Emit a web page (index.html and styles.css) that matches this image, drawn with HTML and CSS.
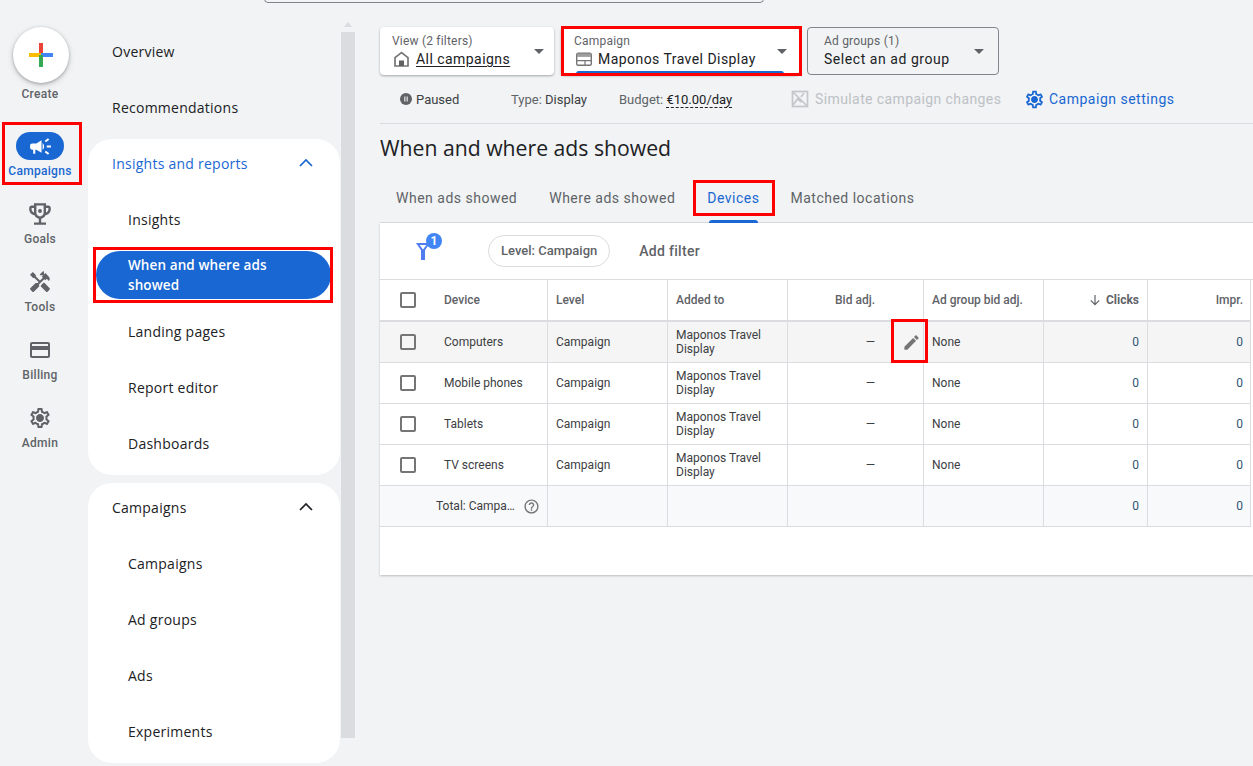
FILE: index.html
```html
<!DOCTYPE html>
<html lang="en">
<head>
  <meta charset="UTF-8" />
  <title>When and where ads showed</title>
  <link rel="stylesheet" href="styles.css">
</head>
<body>
  <div class="searchbar"></div>

  <!-- Icon rail -->
  <aside class="rail">
    <div class="rail-item create">
      <div class="create-btn">
        <svg width="24" height="24" viewBox="0 0 24 24">
          <rect x="10" y="0" width="4" height="12" fill="#ea4335"/>
          <rect x="12" y="10" width="12" height="4" fill="#4285f4"/>
          <rect x="0" y="10" width="12" height="4" fill="#fbbc04"/>
          <rect x="10" y="12" width="4" height="12" fill="#34a853"/>
        </svg>
      </div>
      <span>Create</span>
    </div>
    <div class="rail-item active">
      <div class="rail-pill">
        <svg width="25" height="25" viewBox="0 0 24 24"><path fill="#fff" d="M18 11v2h4v-2h-4zm-2 6.61c.96.71 2.21 1.65 3.2 2.39.4-.53.8-1.07 1.2-1.6-.99-.74-2.24-1.68-3.2-2.4-.4.54-.8 1.08-1.2 1.61zM20.4 5.6c-.4-.53-.8-1.07-1.2-1.6-.99.74-2.24 1.68-3.2 2.4.4.53.8 1.07 1.2 1.6.96-.72 2.21-1.65 3.2-2.4zM4 9c-1.1 0-2 .9-2 2v2c0 1.1.9 2 2 2h1v4h2v-4h1l5 3V6L8 9H4zm11.5 3c0-1.33-.58-2.53-1.5-3.35v6.69c.92-.81 1.5-2.01 1.5-3.34z"/></svg>
      </div>
      <span>Campaigns</span>
      <div class="mark"></div>
    </div>
    <div class="rail-item">
      <svg width="24" height="24" viewBox="2 2 20 20"><path d="M19 5h-2V3H7v2H5c-1.1 0-2 .9-2 2v1c0 2.55 1.92 4.63 4.39 4.94.63 1.5 1.98 2.63 3.61 2.96V19H7v2h10v-2h-4v-3.1c1.63-.33 2.98-1.46 3.61-2.96C19.08 12.63 21 10.55 21 8V7c0-1.1-.9-2-2-2zM5 8V7h2v3.82C5.84 10.4 5 9.3 5 8zm7 6c-1.65 0-3-1.35-3-3V5h6v6c0 1.65-1.35 3-3 3zm7-6c0 1.3-.84 2.4-2 2.82V7h2v1z"/><circle cx="12" cy="9.5" r="1.6"/></svg>
      <span>Goals</span>
    </div>
    <div class="rail-item">
      <svg width="24" height="24" viewBox="0 0 24 24"><path d="M21.67 18.17l-5.3-5.3h-.99l-2.54 2.54v.99l5.3 5.3c.39.39 1.02.39 1.41 0l2.12-2.12c.39-.38.39-1.02 0-1.41zM17.34 10.19l1.41-1.41 2.12 2.12c1.17-1.17 1.17-3.07 0-4.24l-3.54-3.54-1.41 1.41V1.71l-.7-.71-3.54 3.54.71.71h2.83l-1.41 1.41 1.06 1.06-2.89 2.89-4.13-4.13V5.06L4.83 2.04 2 4.87 5.03 7.9h1.41l4.13 4.13-.85.85H7.6l-5.3 5.3c-.39.39-.39 1.02 0 1.41l2.12 2.12c.39.39 1.02.39 1.41 0l5.3-5.3v-2.12l5.15-5.15 1.06 1.05z"/></svg>
      <span>Tools</span>
    </div>
    <div class="rail-item">
      <svg width="24" height="24" viewBox="0 0 24 24"><path d="M20 4H4c-1.11 0-1.99.89-1.99 2L2 18c0 1.11.89 2 2 2h16c1.11 0 2-.89 2-2V6c0-1.11-.89-2-2-2zm0 14H4v-6h16v6zm0-10H4V6h16v2z"/></svg>
      <span>Billing</span>
    </div>
    <div class="rail-item">
      <svg width="24" height="24" viewBox="0 0 24 24"><path d="M19.43 12.98c.04-.32.07-.64.07-.98 0-.34-.03-.66-.07-.98l2.11-1.65c.19-.15.24-.42.12-.64l-2-3.46c-.09-.16-.26-.25-.44-.25-.06 0-.12.01-.17.03l-2.49 1c-.52-.4-1.08-.73-1.69-.98l-.38-2.65C14.46 2.18 14.25 2 14 2h-4c-.25 0-.46.18-.49.42l-.38 2.65c-.61.25-1.17.59-1.69.98l-2.49-1c-.06-.02-.12-.03-.18-.03-.17 0-.34.09-.43.25l-2 3.46c-.13.22-.07.49.12.64l2.11 1.65c-.04.32-.07.65-.07.98 0 .33.03.66.07.98l-2.11 1.65c-.19.15-.24.42-.12.64l2 3.46c.09.16.26.25.44.25.06 0 .12-.01.17-.03l2.49-1c.52.4 1.08.73 1.69.98l.38 2.65c.03.24.24.42.49.42h4c.25 0 .46-.18.49-.42l.38-2.65c.61-.25 1.17-.59 1.69-.98l2.49 1c.06.02.12.03.18.03.17 0 .34-.09.43-.25l2-3.46c.12-.22.07-.49-.12-.64l-2.11-1.65zm-1.98-1.71c.04.31.05.52.05.73 0 .21-.02.43-.05.73l-.14 1.13.89.7 1.08.84-.7 1.21-1.27-.51-1.04-.42-.9.68c-.43.32-.84.56-1.25.73l-1.06.43-.16 1.13-.2 1.35h-1.4l-.19-1.35-.16-1.13-1.06-.43c-.43-.18-.83-.41-1.23-.71l-.91-.7-1.06.43-1.27.51-.7-1.21 1.08-.84.89-.7-.14-1.13c-.03-.31-.05-.54-.05-.74s.02-.43.05-.73l.14-1.13-.89-.7-1.08-.84.7-1.21 1.27.51 1.04.42.9-.68c.43-.32.84-.56 1.25-.73l1.06-.43.16-1.13.2-1.35h1.39l.19 1.35.16 1.13 1.06.43c.43.18.83.41 1.23.71l.91.7 1.06-.43 1.27-.51.7 1.21-1.07.85-.89.7.14 1.13zM12 8c-2.21 0-4 1.79-4 4s1.79 4 4 4 4-1.79 4-4-1.79-4-4-4z"/></svg>
      <span>Admin</span>
    </div>
  </aside>

  <!-- Section nav -->
  <nav class="nav">
    <a class="nav-link top">Overview</a>
    <a class="nav-link top">Recommendations</a>
    <div class="nav-group">
      <div class="nav-head open">
        Insights and reports
        <svg width="16" height="16" viewBox="0 0 16 16"><path d="M2 11l6-6 6 6" fill="none" stroke="currentColor" stroke-width="1.7"/></svg>
      </div>
      <a class="nav-link">Insights</a>
      <a class="nav-link selected">When and where ads showed<div class="mark"></div></a>
      <a class="nav-link">Landing pages</a>
      <a class="nav-link">Report editor</a>
      <a class="nav-link">Dashboards</a>
    </div>
    <div class="nav-group">
      <div class="nav-head">
        Campaigns
        <svg width="16" height="16" viewBox="0 0 16 16"><path d="M2 11l6-6 6 6" fill="none" stroke="currentColor" stroke-width="1.7"/></svg>
      </div>
      <a class="nav-link">Campaigns</a>
      <a class="nav-link">Ad groups</a>
      <a class="nav-link">Ads</a>
      <a class="nav-link">Experiments</a>
    </div>
  </nav>

  <div class="scrollbar">
    <div class="scroll-arrow"></div>
    <div class="scroll-thumb"></div>
  </div>

  <main class="main">
    <div class="pickers">
      <div class="picker view">
        <div class="picker-text">
          <label>View (2 filters)</label>
          <div class="picker-value">
            <svg width="18" height="18" viewBox="0 0 18 18"><path d="M9.5 2.6L3 7.6V16h13V7.6z" fill="none" stroke="#757575" stroke-width="1.7"/><rect x="7" y="10.5" width="5" height="5.5" fill="#616161"/></svg>
            <u>All campaigns</u>
          </div>
        </div>
        <i class="caret"></i>
      </div>
      <div class="picker campaign">
        <div class="picker-text">
          <label>Campaign</label>
          <div class="picker-value">
            <svg width="18" height="18" viewBox="0 0 18 18"><rect x="2.7" y="3.2" width="14.6" height="12" rx="1.5" fill="none" stroke="#757575" stroke-width="1.4"/><rect x="3" y="3.5" width="14" height="3.4" fill="#9e9e9e"/><path d="M3 10.6h14M11 10.6v4.4" stroke="#757575" stroke-width="1.2"/></svg>
            Maponos Travel Display
          </div>
        </div>
        <i class="caret"></i>
        <div class="picker-line"></div>
        <div class="mark"></div>
      </div>
      <div class="picker adgroup">
        <div class="picker-text">
          <label>Ad groups (1)</label>
          <div class="picker-value">Select an ad group</div>
        </div>
        <i class="caret"></i>
      </div>
    </div>

    <div class="infobar">
      <span class="status">
        <svg width="14" height="14" viewBox="0 0 14 14"><circle cx="7" cy="7" r="6" fill="#5f6368"/><path d="M5.3 4.5h1.1v5H5.3zM7.6 4.5h1.1v5H7.6z" fill="#f1f3f4"/></svg>
        Paused
      </span>
      <span class="info type"><em>Type:</em> Display</span>
      <span class="info budget"><em>Budget:</em> <b>€10.00/day</b></span>
      <span class="simulate">
        <svg width="18" height="18" viewBox="0 0 18 18" fill="none" stroke="#c4c7ca" stroke-width="1.7"><rect x="1.5" y="1.5" width="15" height="15"/><path d="M1.5 1.5l15 15M2 15l4.5-6 4 3M10 7l3-4"/></svg>
        Simulate campaign changes
      </span>
      <span class="settings">
        <svg width="21" height="21" viewBox="0 0 24 24"><path fill="#1967d2" d="M19.43 12.98c.04-.32.07-.64.07-.98 0-.34-.03-.66-.07-.98l2.11-1.65c.19-.15.24-.42.12-.64l-2-3.46c-.09-.16-.26-.25-.44-.25-.06 0-.12.01-.17.03l-2.49 1c-.52-.4-1.08-.73-1.69-.98l-.38-2.65C14.46 2.18 14.25 2 14 2h-4c-.25 0-.46.18-.49.42l-.38 2.65c-.61.25-1.17.59-1.69.98l-2.49-1c-.06-.02-.12-.03-.18-.03-.17 0-.34.09-.43.25l-2 3.46c-.13.22-.07.49.12.64l2.11 1.65c-.04.32-.07.65-.07.98 0 .33.03.66.07.98l-2.11 1.65c-.19.15-.24.42-.12.64l2 3.46c.09.16.26.25.44.25.06 0 .12-.01.17-.03l2.49-1c.52.4 1.08.73 1.69.98l.38 2.65c.03.24.24.42.49.42h4c.25 0 .46-.18.49-.42l.38-2.65c.61-.25 1.17-.59 1.69-.98l2.49 1c.06.02.12.03.18.03.17 0 .34-.09.43-.25l2-3.46c.12-.22.07-.49-.12-.64l-2.11-1.65zm-1.98-1.71c.04.31.05.52.05.73 0 .21-.02.43-.05.73l-.14 1.13.89.7 1.08.84-.7 1.21-1.27-.51-1.04-.42-.9.68c-.43.32-.84.56-1.25.73l-1.06.43-.16 1.13-.2 1.35h-1.4l-.19-1.35-.16-1.13-1.06-.43c-.43-.18-.83-.41-1.23-.71l-.91-.7-1.06.43-1.27.51-.7-1.21 1.08-.84.89-.7-.14-1.13c-.03-.31-.05-.54-.05-.74s.02-.43.05-.73l.14-1.13-.89-.7-1.08-.84.7-1.21 1.27.51 1.04.42.9-.68c.43-.32.84-.56 1.25-.73l1.06-.43.16-1.13.2-1.35h1.39l.19 1.35.16 1.13 1.06.43c.43.18.83.41 1.23.71l.91.7 1.06-.43 1.27-.51.7 1.21-1.07.85-.89.7.14 1.13zM12 8c-2.21 0-4 1.79-4 4s1.79 4 4 4 4-1.79 4-4-1.79-4-4-4z"/></svg>
        Campaign settings
      </span>
    </div>

    <h1>When and where ads showed</h1>

    <div class="tabs">
      <span class="tab">When ads showed</span>
      <span class="tab">Where ads showed</span>
      <span class="tab current">Devices<div class="mark"></div></span>
      <span class="tab">Matched locations</span>
    </div>

    <section class="card">
      <div class="filters">
        <div class="funnel">
          <svg width="14" height="17" viewBox="0 0 14 17"><path d="M0 0h14L9 7.2V17H5V7.2L0 0zm3.6 2l3.4 4.6L10.4 2H3.6z" fill="#4f7df0" fill-rule="evenodd"/></svg>
          <span class="badge">1</span>
        </div>
        <span class="chip">Level: Campaign</span>
        <span class="add-filter">Add filter</span>
      </div>

      <table class="grid">
        <colgroup>
          <col class="c-device"><col class="c-level"><col class="c-added"><col class="c-bid"><col class="c-group"><col class="c-num"><col class="c-num">
        </colgroup>
        <thead>
          <tr>
            <th><div class="device"><i class="check"></i>Device</div></th>
            <th>Level</th>
            <th>Added to</th>
            <th class="bid-head">Bid adj.</th>
            <th>Ad group bid adj.</th>
            <th class="num">
              <svg width="14" height="14" viewBox="0 0 14 14"><path d="M7 2v9.4M2.8 7.4L7 11.6l4.2-4.2" fill="none" stroke="#5f6368" stroke-width="1.2"/></svg>
              <b>Clicks</b>
            </th>
            <th class="num">Impr.</th>
          </tr>
        </thead>
        <tbody>
          <tr class="hover">
            <td><div class="device"><i class="check"></i>Computers</div></td>
            <td>Campaign</td>
            <td class="wrap">Maponos Travel Display</td>
            <td class="bid">
              —
              <div class="edit">
                <svg width="19" height="19" viewBox="0 0 24 24"><path fill="#757575" d="M3 17.25V21h3.75L17.81 9.94l-3.75-3.75L3 17.25zM20.71 7.04c.39-.39.39-1.02 0-1.41l-2.34-2.34c-.39-.39-1.02-.39-1.41 0l-1.83 1.83 3.75 3.75 1.83-1.83z"/></svg>
                <div class="mark"></div>
              </div>
            </td>
            <td>None</td>
            <td class="num zero">0</td>
            <td class="num zero">0</td>
          </tr>
          <tr>
            <td><div class="device"><i class="check"></i>Mobile phones</div></td>
            <td>Campaign</td>
            <td class="wrap">Maponos Travel Display</td>
            <td class="bid">—</td>
            <td>None</td>
            <td class="num zero">0</td>
            <td class="num zero">0</td>
          </tr>
          <tr>
            <td><div class="device"><i class="check"></i>Tablets</div></td>
            <td>Campaign</td>
            <td class="wrap">Maponos Travel Display</td>
            <td class="bid">—</td>
            <td>None</td>
            <td class="num zero">0</td>
            <td class="num zero">0</td>
          </tr>
          <tr>
            <td><div class="device"><i class="check"></i>TV screens</div></td>
            <td>Campaign</td>
            <td class="wrap">Maponos Travel Display</td>
            <td class="bid">—</td>
            <td>None</td>
            <td class="num zero">0</td>
            <td class="num zero">0</td>
          </tr>
          <tr class="total">
            <td>
              <div class="total-cell">
                Total: Campa…
                <svg width="17" height="17" viewBox="0 0 24 24"><path fill="#757575" d="M11 18h2v-2h-2v2zm1-16C6.48 2 2 6.48 2 12s4.48 10 10 10 10-4.48 10-10S17.52 2 12 2zm0 18c-4.41 0-8-3.59-8-8s3.59-8 8-8 8 3.59 8 8-3.59 8-8 8zm0-14c-2.21 0-4 1.79-4 4h2c0-1.1.9-2 2-2s2 .9 2 2c0 2-3 1.75-3 5h2c0-2.25 3-2.5 3-5 0-2.21-1.79-4-4-4z"/></svg>
              </div>
            </td>
            <td></td>
            <td></td>
            <td></td>
            <td></td>
            <td class="num zero">0</td>
            <td class="num zero">0</td>
          </tr>
        </tbody>
      </table>
    </section>
  </main>
</body>
</html>
```

FILE: styles.css
```css
* {
  box-sizing: border-box;
}
html, body {
  margin: 0;
  height: 766px;
  overflow: hidden;
}
body {
  display: flex;
  background: #f1f3f4;
  color: #202124;
  font-family: Roboto, "Liberation Sans", sans-serif;
  font-size: 12px;
}
svg {
  display: block;
  flex: none;
}

/* red annotation boxes from the screenshot */
.mark {
  position: absolute;
  border: 3px solid #f00;
  pointer-events: none;
}

.searchbar {
  position: absolute;
  top: -10px;
  left: 264px;
  width: 500px;
  height: 13px;
  border: 1px solid #80868b;
  border-radius: 4px;
}

/* rail */
.rail {
  width: 88px;
  flex: none;
  display: flex;
  flex-direction: column;
  align-items: center;
  padding: 27px 8px 0 0;
}
.rail-item {
  position: relative;
  width: 80px;
  height: 68px;
  display: flex;
  flex-direction: column;
  align-items: center;
  padding-top: 10px;
  color: #5f6368;
  fill: #5f6368;
  font-weight: 500;
  font-size: 12px;
  letter-spacing: 0.3px;
}
.rail-item span {
  margin-top: 5px;
  line-height: 16px;
}
.create {
  height: 97px;
  padding-top: 0;
}
.create span {
  margin-top: 3px;
}
.create-btn {
  width: 56px;
  height: 56px;
  margin-left: 2px;
  border-radius: 50%;
  background: #fff;
  box-shadow: 0 1px 3px rgba(60, 64, 67, 0.35), 0 2px 6px rgba(60, 64, 67, 0.2);
  display: flex;
  align-items: center;
  justify-content: center;
}
.rail-item.active {
  padding-top: 8px;
  color: #1967d2;
}
.rail-item.active span {
  margin-top: 3px;
}
.rail-pill {
  width: 48px;
  height: 28px;
  border-radius: 14px;
  background: #1967d2;
  display: flex;
  align-items: center;
  justify-content: center;
}
.rail-item.active .mark {
  left: 2px;
  top: -2px;
  width: 80px;
  height: 63px;
}

/* section nav */
.nav {
  width: 252px;
  flex: none;
  padding-top: 23px;
  display: flex;
  flex-direction: column;
  font-family: "Open Sans", Roboto, sans-serif;
  font-size: 14px;
}
.nav > * {
  flex: none;
}
.nav-link {
  position: relative;
  display: flex;
  align-items: center;
  height: 56px;
  padding-left: 40px;
  color: #202124;
  letter-spacing: 0.25px;
}
.nav-link.top {
  padding-left: 24px;
}
.nav-link.top + .nav-group {
  margin-top: 4px;
}
.nav-group {
  background: #fff;
  border-radius: 24px;
  margin-bottom: 8px;
  padding-bottom: 4px;
}
.nav-head {
  display: flex;
  align-items: center;
  justify-content: space-between;
  height: 48px;
  padding: 0 26px 0 24px;
  letter-spacing: 0.25px;
  color: #202124;
}
.nav-head.open {
  color: #1967d2;
}
.nav-head + .nav-link {
  margin-top: 4px;
}
.nav-link.selected {
  height: 48px;
  margin: 4px 9px 4px 8px;
  padding: 0 32px;
  border-radius: 24px;
  background: #1967d2;
  color: #fff;
  font-size: 13.5px;
  font-weight: 600;
  letter-spacing: 0.1px;
  line-height: 20px;
}
.nav-link.selected .mark {
  left: -3px;
  right: -2px;
  top: -4px;
  bottom: -4px;
}

.scrollbar {
  width: 14px;
  flex: none;
  margin-left: 1px;
  padding-top: 22px;
}
.scroll-arrow {
  width: 0;
  margin: 0 auto 5px;
  border: 4px solid transparent;
  border-top: 0;
  border-bottom: 5px solid #dadce0;
}
.scroll-thumb {
  height: 706px;
  background: #dadce0;
}

/* main column */
.main {
  margin-left: 25px;
  flex: 1;
  min-width: 0;
  padding-top: 27px;
}
.pickers {
  display: flex;
  height: 48px;
  gap: 7px;
}
.picker {
  position: relative;
  display: flex;
  align-items: center;
  justify-content: space-between;
  height: 48px;
  border-radius: 4px;
  background: #fff;
  box-shadow: 0 1px 2px rgba(60, 64, 67, 0.3), 0 1px 3px rgba(60, 64, 67, 0.15);
  padding: 0 10px 0 12px;
}
.picker.view {
  width: 174px;
}
.picker.campaign {
  width: 238px;
  padding-left: 13px;
  padding-right: 12px;
}
.picker.adgroup {
  width: 192px;
  margin-left: 1px;
  padding-left: 16px;
  padding-right: 14px;
  background: transparent;
  border: 1px solid #80868b;
  box-shadow: none;
}
.picker label {
  display: block;
  color: #5f6368;
  font-size: 12px;
  line-height: 14px;
  letter-spacing: 0.2px;
}
.picker-value {
  display: flex;
  align-items: center;
  gap: 6px;
  margin-top: 2px;
  height: 18px;
  font-size: 14px;
  letter-spacing: 0.45px;
  white-space: nowrap;
}
.adgroup .picker-value {
  letter-spacing: 0.55px;
}
.picker-value u {
  text-underline-offset: 2px;
}
.caret {
  width: 0;
  border: 5px solid transparent;
  border-bottom: 0;
  border-top: 5px solid #5f6368;
}
.picker-line {
  position: absolute;
  left: 15px;
  right: 15px;
  bottom: 1px;
  height: 3px;
  background: #1967d2;
  border-radius: 3px 3px 0 0;
}
.picker.campaign .mark {
  left: 0;
  right: -3px;
  top: -1px;
  bottom: -1px;
}

.infobar {
  display: flex;
  align-items: center;
  height: 49px;
  border-bottom: 1px solid #dadce0;
  font-size: 13px;
  color: #3c4043;
  white-space: nowrap;
}
.infobar em {
  font-style: normal;
  color: #5f6368;
}
.status {
  display: flex;
  align-items: center;
  gap: 3px;
  margin-left: 19px;
  width: 112px;
}
.info.type {
  width: 108px;
}
.info.budget {
  width: 172px;
}
.info b {
  font-weight: 400;
  border-bottom: 1px dashed #202124;
  color: #202124;
}
.simulate {
  display: flex;
  align-items: center;
  gap: 6px;
  width: 233px;
  font-size: 14px;
  color: #bdc1c6;
  letter-spacing: 0.4px;
}
.settings {
  display: flex;
  align-items: center;
  gap: 4px;
  font-size: 14px;
  color: #1967d2;
  letter-spacing: 0.5px;
}

h1 {
  margin: 10px 0 0;
  height: 28px;
  font-size: 21.2px;
  line-height: 28px;
  font-weight: 400;
  font-family: "Open Sans", Roboto, sans-serif;
  color: #202124;
}

.tabs {
  display: flex;
  height: 43px;
  margin-top: 18px;
  border-bottom: 1px solid #dadce0;
  font-size: 14px;
  letter-spacing: 0.5px;
}
.tab {
  position: relative;
  display: flex;
  align-items: center;
  height: 42px;
  padding: 0 16px 6px;
  color: #5f6368;
  white-space: nowrap;
}
.tab.current {
  color: #1967d2;
  margin-left: 2px;
  padding: 0 15px 6px 14px;
}
.tab.current::after {
  content: "";
  position: absolute;
  left: 16px;
  right: 16px;
  bottom: -1px;
  height: 3px;
  background: #1967d2;
  border-radius: 3px 3px 0 0;
}
.tab.current .mark {
  left: 0;
  right: -1px;
  top: 0;
  bottom: 6px;
}

/* table card */
.card {
  background: #fff;
  height: 352px;
  box-shadow: 0 1px 2px rgba(60, 64, 67, 0.3);
  overflow: hidden;
}
.filters {
  display: flex;
  align-items: center;
  height: 57px;
  border-bottom: 1px solid #dadce0;
}
.funnel {
  position: relative;
  width: 108px;
  height: 30px;
  padding: 7px 0 0 36px;
}
.badge {
  position: absolute;
  left: 46px;
  top: -3px;
  width: 16px;
  height: 16px;
  border-radius: 50%;
  background: #4285f4;
  color: #fff;
  font-size: 12px;
  font-weight: 700;
  line-height: 16px;
  text-align: center;
}
.chip {
  height: 32px;
  line-height: 30px;
  padding: 0 12px;
  border: 1px solid #dadce0;
  border-radius: 16px;
  color: #5f6368;
  font-weight: 500;
  font-size: 13px;
}
.add-filter {
  margin-left: 29px;
  color: #5f6368;
  font-size: 14px;
  font-weight: 500;
  letter-spacing: 0.3px;
}

.grid {
  width: 871px;
  table-layout: fixed;
  border-collapse: separate;
  border-spacing: 0;
  color: #3c4043;
}
.c-device { width: 168px; }
.c-level { width: 120px; }
.c-added { width: 120px; }
.c-bid { width: 136px; }
.c-group { width: 120px; }
.c-num { width: 104px; }
.c-num:last-child { width: 103px; }
.grid th, .grid td {
  padding: 0 8px;
  border-right: 1px solid #dadce0;
  border-bottom: 1px solid #dadce0;
  text-align: left;
  font-size: 12px;
  font-weight: 400;
  line-height: 14px;
}
.grid th {
  height: 42px;
  border-bottom-width: 2px;
  font-weight: 500;
  color: #5f6368;
}
.grid td {
  height: 41px;
}
.grid th.num, .grid td.num {
  text-align: right;
}
.grid th:last-child, .grid td:last-child {
  padding-right: 7px;
}
.grid th.num svg {
  display: inline-block;
  vertical-align: -3px;
  margin-right: 1px;
}
.grid th.num b {
  font-weight: 700;
}
.grid th.bid-head {
  text-align: right;
  padding-right: 48px;
}
.device {
  display: flex;
  align-items: center;
  padding-left: 12px;
}
.check {
  width: 16px;
  height: 16px;
  margin-right: 28px;
  border: 2px solid #757575;
  border-radius: 2px;
}
.hover td {
  background: #f5f5f5;
}
.grid .bid {
  position: relative;
  text-align: right;
  padding-right: 48px;
}
.edit {
  position: absolute;
  right: 0;
  top: 0;
  bottom: 0;
  width: 24px;
  display: flex;
  align-items: center;
  justify-content: center;
}
.edit .mark {
  left: -8px;
  right: -5px;
  top: -3px;
  bottom: -1px;
}
.grid .zero {
  color: #2f5573;
}
.total td {
  background: #f8f9fa;
}
.total-cell {
  display: flex;
  align-items: center;
  justify-content: space-between;
  padding-left: 48px;
  margin-right: -1px;
}
```
